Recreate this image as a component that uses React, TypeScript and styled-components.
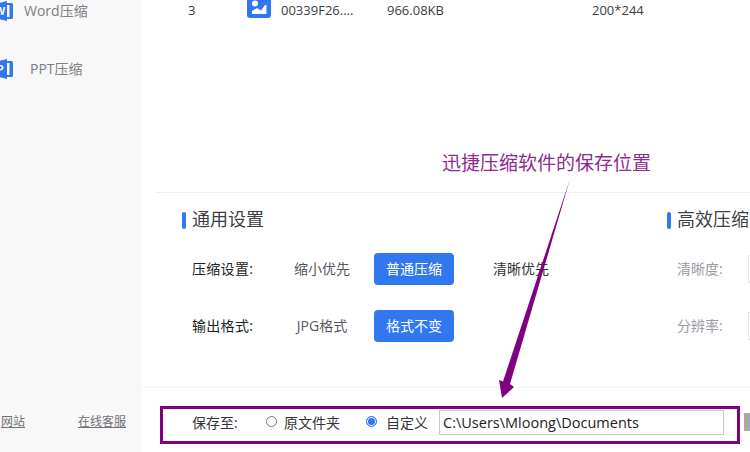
import React from "react";
import styled, { createGlobalStyle } from "styled-components";

const Global = createGlobalStyle`
  html, body { margin: 0; padding: 0; background: #fff; }
  #root { width: 750px; height: 452px; overflow: hidden; }
`;

const FONT = `"Open Sans", "Noto Sans CJK SC", sans-serif`;
const BLUE = "#2f78f0";
const PURPLE = "#800080";

const Page = styled.div`
  position: relative;
  width: 750px;
  height: 452px;
  overflow: hidden;
  display: flex;
  font-family: ${FONT};
  font-size: 14px;
`;

const Sidebar = styled.aside`
  flex: 0 0 142px;
  background: #f8f8f8;
  display: flex;
  flex-direction: column;
  overflow: hidden;
`;

const NavList = styled.nav`
  display: flex;
  flex-direction: column;
  gap: 34px;
  margin-top: -1px;
  flex: 1;
`;

const NavItem = styled.div<{ $gap: number }>`
  display: flex;
  align-items: center;
  height: 24px;
  margin-left: -8px;
  color: #7d7f85;
  font-size: 14px;
  gap: ${(p) => p.$gap}px;
`;

const NavText = styled.span`
  margin-bottom: 2px;
`;

const SideFooter = styled.div`
  display: flex;
  justify-content: space-between;
  margin: 0 16px 21px 1px;
  height: 18px;
  line-height: 18px;
`;

const FootLink = styled.span`
  color: #6f7176;
  font-size: 12px;
  text-decoration: underline;
`;

const Main = styled.main`
  flex: 1;
  min-width: 0;
  display: flex;
  flex-direction: column;
  overflow: hidden;
`;

const FileRow = styled.div`
  height: 192px;
  margin-left: 14px;
  border-bottom: 1px solid #f0f0f0;
  display: grid;
  grid-template-columns: 59px 34px 106px 205px 60px;
  grid-auto-rows: 20px;
  align-items: center;
  align-content: start;
  color: #3a3d42;
  font-size: 13px;
  padding-left: 32px;
`;

const Cell = styled.span`
  white-space: nowrap;
  line-height: 20px;
`;

const ThumbCell = styled.span`
  display: flex;
  align-items: flex-start;
  height: 20px;
`;

const Settings = styled.section`
  flex: 1;
  display: flex;
  padding: 17px 0 0 40px;
  min-height: 0;
`;

const Group = styled.div<{ $width: number }>`
  flex: 0 0 ${(p) => p.$width}px;
`;

const Heading = styled.h2`
  margin: 0 0 23px;
  display: flex;
  align-items: center;
  gap: 6px;
  font-size: 18px;
  font-weight: 400;
  color: #3c3f44;
  height: 20px;
  line-height: 20px;
  white-space: nowrap;
`;

const HeadText = styled.span`
  margin-bottom: 3px;
`;

const HeadMark = styled.i`
  display: block;
  width: 4px;
  height: 17px;
  border-radius: 2px;
  background: ${BLUE};
`;

const OptionRow = styled.div`
  display: flex;
  align-items: center;
  height: 32px;
  margin-bottom: 25px;
  padding-left: 10px;
`;

const OptionLabel = styled.span`
  flex: 0 0 90px;
  color: #222;
  white-space: nowrap;
  letter-spacing: 0.3px;
  margin-bottom: 3px;
`;

const Choice = styled.span<{ $on?: boolean; $dark?: boolean; $after?: number }>`
  flex: 0 0 80px;
  height: 32px;
  box-sizing: border-box;
  padding-bottom: 2px;
  margin-right: ${(p) => p.$after ?? 0}px;
  border-radius: 4px;
  display: flex;
  align-items: center;
  justify-content: center;
  white-space: nowrap;
  background: ${(p) => (p.$on ? BLUE : "transparent")};
  color: ${(p) => (p.$on ? "#fff" : p.$dark ? "#333" : "#55585e")};
`;

const SideOptionRow = styled.div`
  display: flex;
  align-items: center;
  height: 32px;
  margin-bottom: 25px;
  padding-left: 10px;
  white-space: nowrap;
`;

const SideLabel = styled.span`
  color: #9a9ca3;
  flex: 0 0 71px;
  margin-bottom: 3px;
`;

const SideBox = styled.span`
  display: block;
  flex: 0 0 40px;
  height: 28px;
  border: 1px solid #e6e6e6;
  box-sizing: border-box;
`;

const SaveBar = styled.footer`
  height: 65px;
  border-top: 1px solid #f4f4f4;
  display: flex;
  align-items: flex-start;
  padding: 18px 0 0 18px;
  box-sizing: border-box;
  gap: 4px;
`;

const SaveBox = styled.div`
  flex: 0 0 580px;
  height: 38px;
  box-sizing: border-box;
  border: 3px solid ${PURPLE};
  display: flex;
  align-items: center;
  padding: 0 0 6px 29px;
  color: #333;
`;

const SaveLabel = styled.span`
  flex: 0 0 74px;
  white-space: nowrap;
`;

const Radio = styled.i<{ $on?: boolean; $after: number }>`
  display: block;
  box-sizing: border-box;
  flex: 0 0 11px;
  height: 11px;
  border-radius: 50%;
  margin-right: ${(p) => p.$after}px;
  margin-top: -2px;
  border: 1px solid ${(p) => (p.$on ? BLUE : "#767676")};
  background: ${(p) => (p.$on ? BLUE : "#fff")};
  box-shadow: ${(p) => (p.$on ? "inset 0 0 0 1px #fff" : "none")};
`;

const RadioText = styled.span<{ $after: number }>`
  margin-right: ${(p) => p.$after}px;
  white-space: nowrap;
`;

const PathField = styled.div`
  flex: 0 0 285px;
  height: 25px;
  box-sizing: border-box;
  border: 1px solid #c8c8c8;
  padding-left: 3px;
  line-height: 23px;
  font-size: 14.5px;
  color: #222;
  white-space: nowrap;
`;

const GreyBtn = styled.span`
  display: block;
  flex: 0 0 12px;
  height: 18px;
  margin-top: 7px;
  background: #a9a9a9;
`;

const Callout = styled.div`
  position: absolute;
  left: 442px;
  top: 152px;
  font-family: "Liberation Serif", "Noto Sans CJK SC", serif;
  font-size: 19px;
  line-height: 24px;
  color: #8f2a8f;
  white-space: nowrap;
`;

const ArrowSvg = styled.svg`
  position: absolute;
  left: 0;
  top: 0;
  pointer-events: none;
`;

const DocIcon = ({ letter }: { letter: string }) => (
  <svg width="22" height="22" viewBox="0 0 22 22">
    <rect x="17.5" y="3" width="3.5" height="16" rx="1.5" fill={BLUE} />
    <rect x="13" y="3" width="6" height="2" fill={BLUE} />
    <rect x="13" y="17" width="6" height="2" fill={BLUE} />
    <path d="M1 4.5 L15 1 V21 L1 17.5Z" fill={BLUE} />
    <text x="8" y="15" fontSize="11" fontWeight="700" textAnchor="middle" fill="#fff" fontFamily="Liberation Sans">
      {letter}
    </text>
  </svg>
);

const ImageIcon = () => (
  <svg width="24" height="18" viewBox="0 0 24 18">
    <rect x="0" y="-4" width="24" height="22" rx="3" fill={BLUE} />
    <circle cx="8" cy="3.5" r="3" fill="#fff" />
    <path d="M5 14 V11 L10 8 L14 10.5 L18 5 L19.5 5 V14Z" fill="#fff" />
  </svg>
);

export default function App() {
  return (
    <Page>
      <Global />
      <Sidebar>
        <NavList>
          <NavItem $gap={10}>
            <DocIcon letter="W" />
            <NavText>Word压缩</NavText>
          </NavItem>
          <NavItem $gap={16}>
            <DocIcon letter="P" />
            <NavText>PPT压缩</NavText>
          </NavItem>
        </NavList>
        <SideFooter>
          <FootLink>网站</FootLink>
          <FootLink>在线客服</FootLink>
        </SideFooter>
      </Sidebar>
      <Main>
        <FileRow>
          <Cell>3</Cell>
          <ThumbCell>
            <ImageIcon />
          </ThumbCell>
          <Cell>00339F26....</Cell>
          <Cell>966.08KB</Cell>
          <Cell>200*244</Cell>
        </FileRow>
        <Settings>
          <Group $width={485}>
            <Heading>
              <HeadMark />
              <HeadText>通用设置</HeadText>
            </Heading>
            <OptionRow>
              <OptionLabel>压缩设置:</OptionLabel>
              <Choice $after={12}>缩小优先</Choice>
              <Choice $on $after={27}>普通压缩</Choice>
              <Choice $dark>清晰优先</Choice>
            </OptionRow>
            <OptionRow>
              <OptionLabel>输出格式:</OptionLabel>
              <Choice $after={12}>JPG格式</Choice>
              <Choice $on>格式不变</Choice>
            </OptionRow>
          </Group>
          <Group $width={120}>
            <Heading>
              <HeadMark />
              <HeadText>高效压缩</HeadText>
            </Heading>
            <SideOptionRow>
              <SideLabel>清晰度:</SideLabel>
              <SideBox />
            </SideOptionRow>
            <SideOptionRow>
              <SideLabel>分辨率:</SideLabel>
              <SideBox />
            </SideOptionRow>
          </Group>
        </Settings>
        <SaveBar>
          <SaveBox>
            <SaveLabel>保存至:</SaveLabel>
            <Radio $after={7} />
            <RadioText $after={26}>原文件夹</RadioText>
            <Radio $on $after={9} />
            <RadioText $after={11}>自定义</RadioText>
            <PathField>C:\Users\Mloong\Documents</PathField>
          </SaveBox>
          <GreyBtn />
        </SaveBar>
      </Main>
      <Callout>迅捷压缩软件的保存位置</Callout>
      <ArrowSvg width="750" height="452" viewBox="0 0 750 452">
        <path d="M570 179 L510 384 L514 387 L502 398 L499 380 L503 381.5Z" fill={PURPLE} />
      </ArrowSvg>
    </Page>
  );
}
